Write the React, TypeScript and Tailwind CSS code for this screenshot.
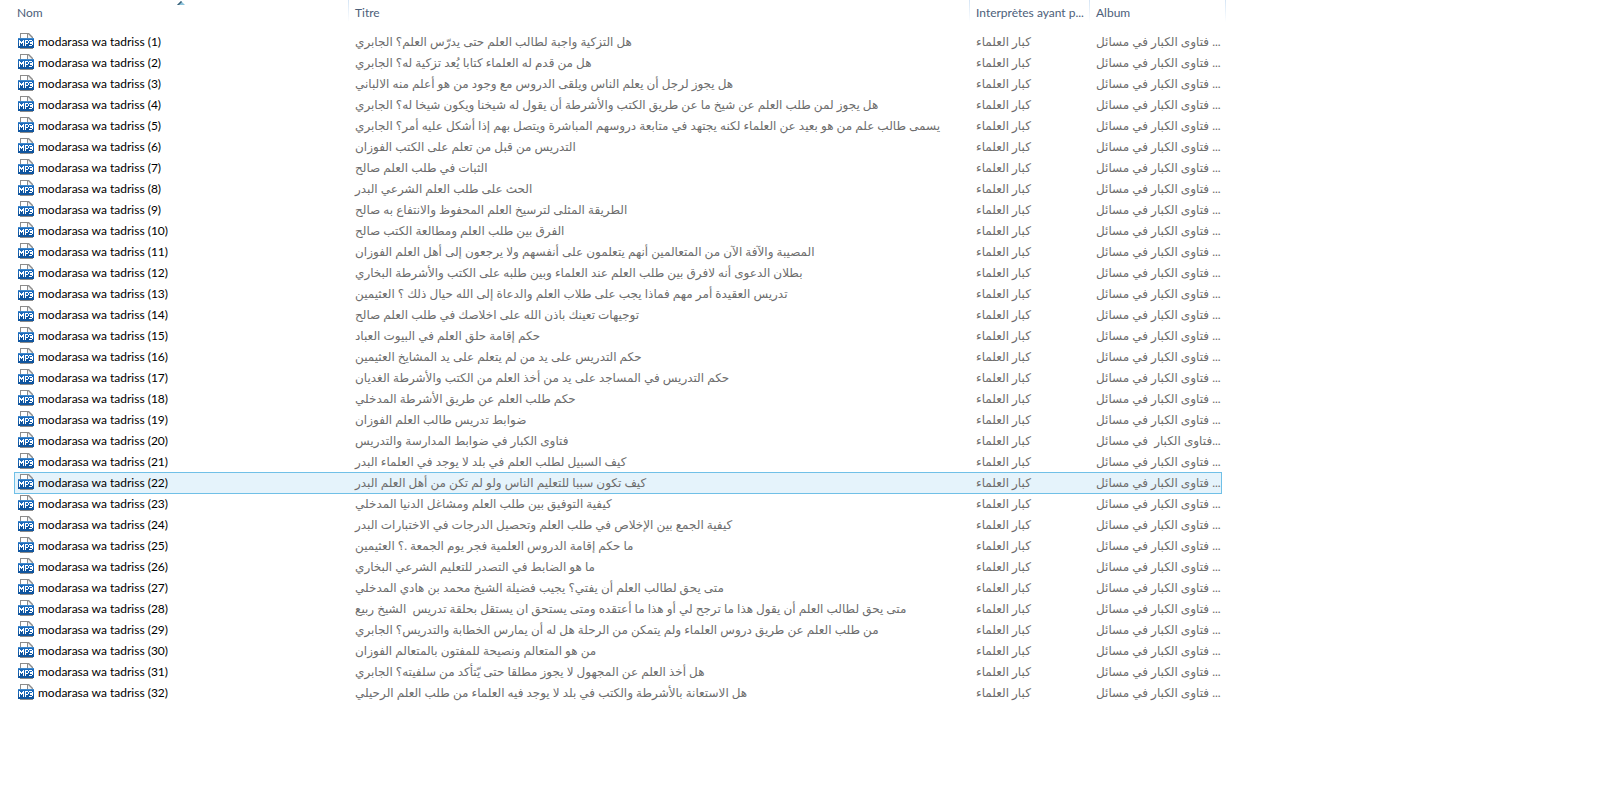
const titles = [
  "هل التزكية واجبة لطالب العلم حتى يدرّس العلم؟ الجابري",
  "هل من قدم له العلماء كتابا يُعد تزكية له؟ الجابري",
  "هل يجوز لرجل أن يعلم الناس ويلقى الدروس مع وجود من هو أعلم منه الالباني",
  "هل يجوز لمن طلب العلم عن شيخ ما عن طريق الكتب والأشرطة أن يقول له شيخنا ويكون شيخا له؟ الجابري",
  "يسمى طالب علم من هو بعيد عن العلماء لكنه يجتهد في متابعة دروسهم المباشرة ويتصل بهم إذا أشكل عليه أمر؟ الجابري",
  "التدريس من قبل من تعلم على الكتب الفوزان",
  "الثبات في طلب العلم صالح",
  "الحث على طلب العلم الشرعي البدر",
  "الطريقة المثلى لترسيخ العلم المحفوظ والانتفاع به صالح",
  "الفرق بين طلب العلم ومطالعة الكتب صالح",
  "المصيبة والآفة الآن من المتعالمين أنهم يتعلمون على أنفسهم ولا يرجعون إلى أهل العلم الفوزان",
  "بطلان الدعوى أنه لافرق بين طلب العلم عند العلماء وبين طلبه على الكتب والأشرطة البخاري",
  "تدريس العقيدة أمر مهم فماذا يجب على طلاب العلم والدعاة إلى الله حيال ذلك ؟ العثيمين",
  "توجيهات تعينك باذن الله على اخلاصك في طلب العلم صالح",
  "حكم إقامة حلق العلم في البيوت العباد",
  "حكم التدريس على يد من لم يتعلم على يد المشايخ العثيمين",
  "حكم التدريس في المساجد على يد من أخذ العلم من الكتب والأشرطة الغديان",
  "حكم طلب العلم عن طريق الأشرطة المدخلي",
  "ضوابط تدريس طالب العلم الفوزان",
  "فتاوى الكبار في ضوابط المدارسة والتدريس",
  "كيف السبيل لطلب العلم في بلد لا يوجد في العلماء البدر",
  "كيف تكون سببا للتعليم الناس ولو لم تكن من أهل العلم البدر",
  "كيفية التوفيق بين طلب العلم ومشاغل الدنيا المدخلي",
  "كيفية الجمع بين الإخلاص في طلب العلم وتحصيل الدرجات في الاختبارات البدر",
  "ما حكم إقامة الدروس العلمية فجر يوم الجمعة .؟ العثيمين",
  "ما هو الضابط في التصدر للتعليم الشرعي البخاري",
  "متى يحق لطالب العلم أن يفتي؟ يجيب فضيلة الشيخ محمد بن هادي المدخلي",
  "متى يحق لطالب العلم أن يقول هذا ما ترجح لي أو هذا ما أعتقده ومتى يستحق ان يستقل بحلقة تدريس  الشيخ ربيع",
  "من طلب العلم عن طريق دروس العلماء ولم يتمكن من الرحلة هل له أن يمارس الخطابة والتدريس؟ الجابري",
  "من هو المتعالم ونصيحة للمفتون بالمتعالم الفوزان",
  "هل أخذ العلم عن المجهول لا يجوز مطلقا حتى يّتأكد من سلفيته؟ الجابري",
  "هل الاستعانة بالأشرطة والكتب في بلد لا يوجد فيه العلماء من طلب العلم الرحيلي",
];

const SELECTED = 22;

const columns = ["Nom", "Titre", "Interprètes ayant p...", "Album"];

function Mp3Icon() {
  return (
    <svg viewBox="0 0 16 16" className="size-4 shrink-0" aria-hidden="true" shapeRendering="crispEdges">
      <path d="M2 0h9l4 4v12H2z" fill="#8c8c8c" shapeRendering="auto" />
      <path d="M3 1h6v4h5v10H3z" fill="#fff" />
      <path d="M10 1l4 4h-4z" fill="#f2f2f2" shapeRendering="auto" />
      <path d="M0 5h16v10H0z" fill="#1a69bb" />
      <path d="M0 10h16v5H0z" fill="#0f559f" />
      <path d="M0 5h16v1H0z" fill="#4089cc" />
      <path
        d="M1 7h1v6H1zM2 8h1v2H2zM3 9h1v2H3zM4 8h1v2H4zM5 7h1v6H5zM7 7h1v6H7zM8 7h2v1H8zM10 8h1v2h-1zM8 10h2v1H8zM11 7h1v1h-1zM12 7h2v1h-2zM14 8h1v2h-1zM12 9h2v2h-2zM14 10h1v2h-1zM12 12h2v1h-2zM11 12h1v1h-1z"
        fill="#fff"
      />
    </svg>
  );
}

export default function App() {
  return (
    <main className="min-h-screen overflow-x-auto bg-white pl-3.5 font-['Lato','DejaVu_Sans',sans-serif] text-xs">
      <table className="w-[1212px] table-fixed border-separate border-spacing-0 whitespace-pre text-left">
        <colgroup>
          <col className="w-[335px]" />
          <col className="w-[621px]" />
          <col className="w-[120px]" />
          <col className="w-[132px]" />
          <col className="w-[4px]" />
        </colgroup>
        <thead>
          <tr className="h-[31px]">
            {columns.map((name, i) => (
              <th key={name} scope="col" aria-sort={i === 0 ? "ascending" : undefined} className="p-0 align-top font-normal">
                <div className="flex h-[22px]">
                  <button
                    type="button"
                    className={`relative min-w-0 flex-1 pt-1 text-left text-[#4c607a] ${i === 0 ? "pl-[3px]" : "pl-1.5"}`}
                  >
                    {name}
                    {i === 0 && (
                      <svg viewBox="0 0 8 4" className="absolute top-px left-1/2 -ml-1 h-1 w-2" aria-hidden="true">
                        <path d="M4 0l4 4H0z" fill="#8cc4dc" />
                        <path d="M4 0L0 4h2l3-3z" fill="#3c5f75" />
                      </svg>
                    )}
                  </button>
                  {i < 3 && <span className="w-px bg-linear-to-b from-[#d5e5f5] to-white" />}
                </div>
              </th>
            ))}
            <td className="p-0 align-top">
              <div className="ml-auto h-[22px] w-px bg-linear-to-b from-[#d5e5f5] to-white" />
            </td>
          </tr>
        </thead>
        <tbody>
          {titles.map((title, i) => {
            const n = i + 1;
            const cell =
              n === SELECTED
                ? "border-t border-[#70c0e7] bg-[#e5f3fb] shadow-[0_1px_0_#70c0e7] p-0"
                : "border-t border-transparent p-0";
            return (
              <tr key={n} className="h-[21px]" aria-selected={n === SELECTED}>
                <td className={`${cell} border-l`}>
                  <div className="flex h-5 items-start gap-1 pl-[3px] pt-px text-black">
                    <Mp3Icon />
                    <span className="leading-[18px]">modarasa wa tadriss ({n})</span>
                  </div>
                </td>
                <td className={cell}>
                  <div className="h-5 pl-1.5 leading-5 text-[#6d6d6d]">{title}</div>
                </td>
                <td className={cell}>
                  <div className="h-5 pl-1.5 leading-5 text-[#6d6d6d]">كبار العلماء</div>
                </td>
                <td className={`${cell} border-r`}>
                  <div className="h-5 pl-1.5 leading-5 text-[#6d6d6d]">
                    {n === 20 ? "فتاوى الكبار  في مسائل..." : "فتاوى الكبار في مسائل ..."}
                  </div>
                </td>
                <td className="p-0" />
              </tr>
            );
          })}
        </tbody>
      </table>
    </main>
  );
}
